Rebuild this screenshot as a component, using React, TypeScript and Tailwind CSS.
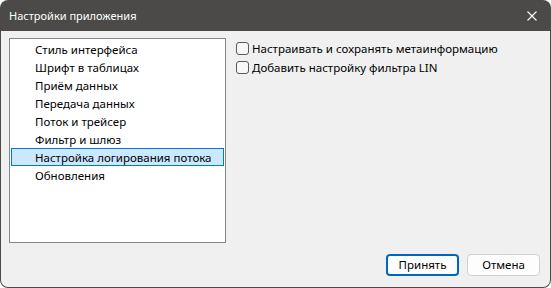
const items = [
  "Стиль интерфейса",
  "Шрифт в таблицах",
  "Приём данных",
  "Передача данных",
  "Поток и трейсер",
  "Фильтр и шлюз",
  "Настройка логирования потока",
  "Обновления",
];

const App = () => {
  const selected = 6;
  return (
    <div className="w-[551px] h-[288px] bg-[#4b4a48] rounded-[8px] overflow-hidden flex flex-col p-px font-['Segoe_UI','Noto_Sans',sans-serif] text-[11.5px] text-black">
      <div className="h-[30px] flex items-center justify-between pl-[8px] pr-[12px] text-white">
        <span className="text-[11px] pt-px">Настройки приложения</span>
        <svg width="10" height="10" viewBox="0 0 10 10" className="mr-[1px]">
          <path d="M0.5 0.5 L9.5 9.5 M9.5 0.5 L0.5 9.5" stroke="#fff" strokeWidth="1.1" />
        </svg>
      </div>
      <div className="flex-1 bg-[#f0f0f0] rounded-b-[7px] flex flex-col">
        <div className="flex pt-[7px] pl-[8px]">
          <div className="w-[217px] h-[205px] bg-white border border-[#828790] pt-px px-px">
            {items.map((item, i) => (
              <div
                key={item}
                className={
                  i === selected
                    ? "h-[18px] flex items-center pl-[23px] pt-px bg-[#cce8ff] border border-[#0078d7]"
                    : "h-[18px] flex items-center pl-[24px] pt-px"
                }
              >
                {item}
              </div>
            ))}
          </div>
          <div className="flex flex-col pl-[10px] pt-[4px] gap-[6px]">
            {["Настраивать и сохранять метаинформацию", "Добавить настройку фильтра LIN"].map((t) => (
              <label key={t} className="flex items-center h-[13px] gap-[3px]">
                <span className="w-[13px] h-[13px] rounded-[3px] border border-[#5a5a5a] bg-[#f7f7f7]" />
                <span className="pt-px">{t}</span>
              </label>
            ))}
          </div>
        </div>
        <div className="flex justify-end gap-[8px] pr-[10px] pt-[11px]">
          <button className="w-[73px] h-[22px] rounded-[4px] border-2 border-[#0067c0] bg-[#fdfdfd] flex items-center justify-center">
            Принять
          </button>
          <button className="w-[73px] h-[22px] rounded-[4px] border border-[#d0d0d0] bg-[#fdfdfd] flex items-center justify-center">
            Отмена
          </button>
        </div>
      </div>
    </div>
  );
};

export default App;
